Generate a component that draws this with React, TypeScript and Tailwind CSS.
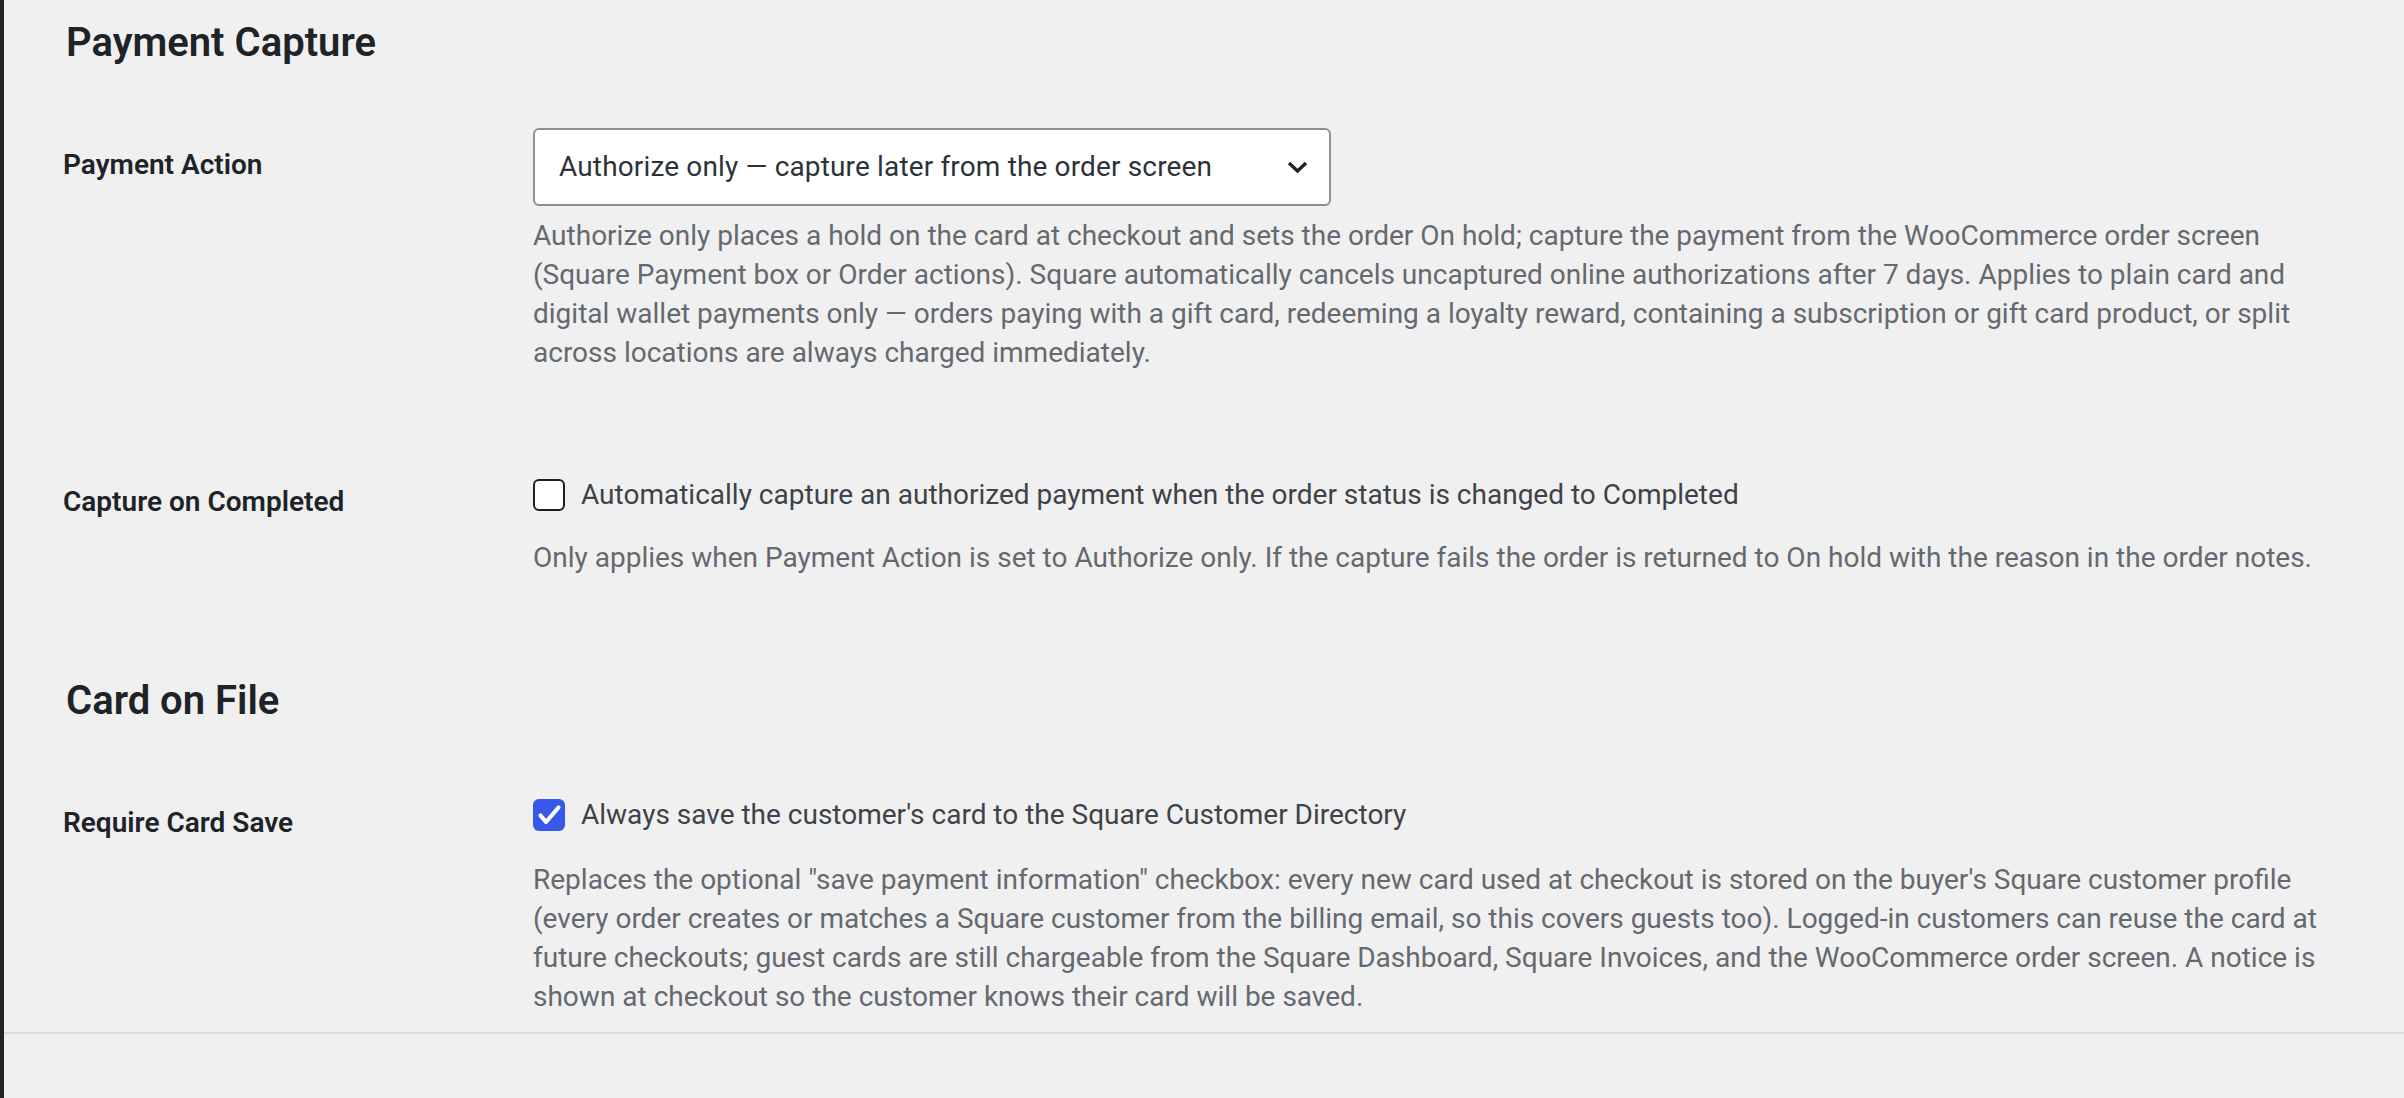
import React from "react"

const font = { fontFamily: "Roboto, 'Liberation Sans', sans-serif" }

function Desc({ lines, className = "" }: { lines: string[]; className?: string }) {
  return (
    <p className={`text-[28px] leading-[39px] text-[#646970] whitespace-nowrap ${className}`}>
      {lines.map((l, i) => (
        <span key={i} className="block">
          {l}
        </span>
      ))}
    </p>
  )
}

function Checkbox({ checked }: { checked: boolean }) {
  if (checked) {
    return (
      <span className="flex h-[32px] w-[32px] shrink-0 items-center justify-center rounded-[6px] bg-[#3858e9]">
        <svg width="32" height="32" viewBox="0 0 32 32" fill="none">
          <path d="M7.5 16.5 L13 23 L25.5 8.5" stroke="#fff" strokeWidth="4.2" strokeLinecap="round" strokeLinejoin="round" />
        </svg>
      </span>
    )
  }
  return <span className="block h-[32px] w-[32px] shrink-0 rounded-[6px] border-2 border-[#1e1e1e] bg-white" />
}

export default function App() {
  return (
    <main className="min-h-screen bg-[#f0f0f1] border-l-4 border-[#1d2327]" style={font}>
      <div className="pl-[59px] pt-[20px]">
        {/* Payment Capture */}
        <h2 className="ml-[3px] text-[40px] leading-[46px] font-semibold text-[#1d2327]">Payment Capture</h2>

        <div className="mt-[62px] grid grid-cols-[470px_1fr]">
          <div className="mt-[19px] text-[28px] leading-[36px] font-semibold text-[#1d2327]">Payment Action</div>
          <div>
            <div className="flex h-[78px] w-[798px] items-center justify-between rounded-[6px] border-2 border-[#8c8f94] bg-white pl-[24px] pr-[21px]">
              <span className="text-[28px] leading-[36px] tracking-[0.15px] text-[#2c3338]">
                Authorize only — capture later from the order screen
              </span>
              <svg width="21" height="12" viewBox="0 0 21 12" fill="none">
                <path d="M2 2 L10.5 10 L19 2" stroke="#1d2327" strokeWidth="3.4" />
              </svg>
            </div>
            <Desc
              className="mt-[10px]"
              lines={[
                "Authorize only places a hold on the card at checkout and sets the order On hold; capture the payment from the WooCommerce order screen",
                "(Square Payment box or Order actions). Square automatically cancels uncaptured online authorizations after 7 days. Applies to plain card and",
                "digital wallet payments only — orders paying with a gift card, redeeming a loyalty reward, containing a subscription or gift card product, or split",
                "across locations are always charged immediately.",
              ]}
            />
          </div>
        </div>

        <div className="mt-[105px] grid grid-cols-[470px_1fr]">
          <div className="mt-[7px] text-[28px] leading-[36px] font-semibold text-[#1d2327]">Capture on Completed</div>
          <div>
            <label className="flex items-center gap-[16px]">
              <Checkbox checked={false} />
              <span className="text-[28px] leading-[36px] text-[#3c434a]">
                Automatically capture an authorized payment when the order status is changed to Completed
              </span>
            </label>
            <Desc
              className="mt-[25px]"
              lines={[
                "Only applies when Payment Action is set to Authorize only. If the capture fails the order is returned to On hold with the reason in the order notes.",
              ]}
            />
          </div>
        </div>

        {/* Card on File */}
        <h2 className="ml-[3px] mt-[101px] text-[40px] leading-[46px] font-semibold text-[#1d2327]">Card on File</h2>

        <div className="mt-[73px] grid grid-cols-[470px_1fr]">
          <div className="mt-[8px] text-[28px] leading-[36px] font-semibold text-[#1d2327]">Require Card Save</div>
          <div>
            <label className="flex items-center gap-[16px]">
              <Checkbox checked={true} />
              <span className="text-[28px] leading-[36px] text-[#3c434a]">
                Always save the customer's card to the Square Customer Directory
              </span>
            </label>
            <Desc
              className="mt-[27px]"
              lines={[
                "Replaces the optional \"save payment information\" checkbox: every new card used at checkout is stored on the buyer's Square customer profile",
                "(every order creates or matches a Square customer from the billing email, so this covers guests too). Logged-in customers can reuse the card at",
                "future checkouts; guest cards are still chargeable from the Square Dashboard, Square Invoices, and the WooCommerce order screen. A notice is",
                "shown at checkout so the customer knows their card will be saved.",
              ]}
            />
          </div>
        </div>
      </div>
      <div className="mt-[16px] h-[2px] bg-[#dcdcde]" />
    </main>
  )
}
